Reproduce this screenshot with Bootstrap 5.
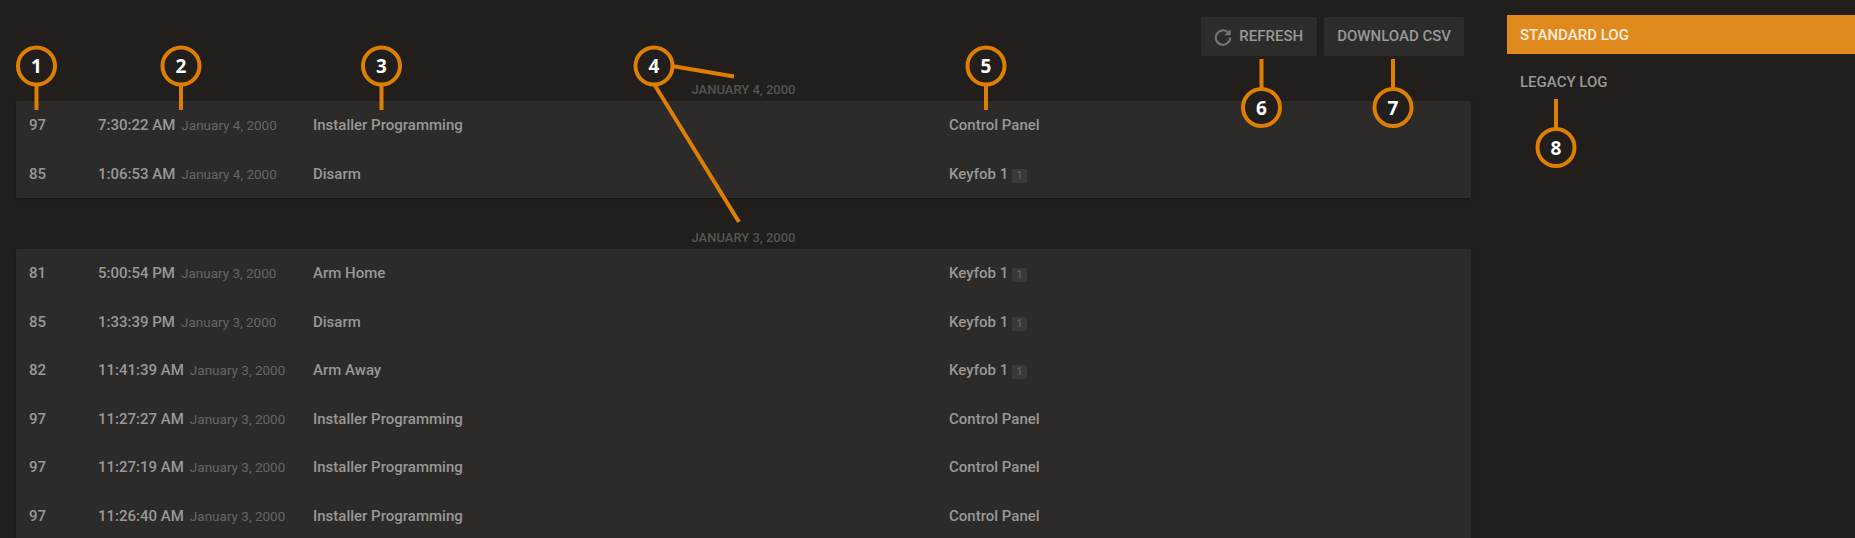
<!DOCTYPE html>
<html lang="en">
<head>
  <meta charset="UTF-8" />
  <meta name="viewport" content="width=device-width, initial-scale=1" />
  <title>Event Log</title>
  <link href="https://cdn.jsdelivr.net/npm/bootstrap@5.3.2/dist/css/bootstrap.min.css" rel="stylesheet">
  <style>
    html, body {
      height: 100%;
      overflow: hidden;
    }
    body {
      font-family: Roboto, "Liberation Sans", sans-serif;
      font-size: 15px;
      font-weight: 500;
      background: #211e1b;
      color: #999896;
    }
    .page-wrap {
      height: 538px;
      overflow: hidden;
    }
    .log-main {
      width: 1471px;
      padding-left: 16px;
    }
    .log-actions {
      padding: 17px 7px 0 0;
      margin-bottom: 21px;
      gap: 7px;
    }
    .log-btn {
      height: 39px;
      padding: 0 13px;
      background: #2d2c2b;
      color: #999896;
      border: 0;
      border-radius: 2px;
      font-size: 15px;
      font-weight: 500;
      text-transform: uppercase;
    }
    .log-btn.with-icon {
      padding-right: 14px;
    }
    .log-btn svg {
      margin-right: 7px;
    }
    .date-head {
      height: 24px;
      line-height: 26px;
      font-size: 13px;
      font-weight: 500;
      color: #555452;
      text-transform: uppercase;
      text-align: center;
    }
    .date-head.later {
      margin-top: 27px;
    }
    .log-rows {
      background: #2c2b2a;
      border-radius: 2px;
      box-shadow: 0 1px 2px rgba(0,0,0,0.25);
    }
    .log-row {
      height: 48.5px;
      align-items: center;
      padding-top: 1px;
      border-bottom: 1px solid #292827;
    }
    .log-row:last-child {
      border-bottom: 0;
    }
    .cell-id { width: 82px; padding-left: 13px; }
    .cell-time { width: 215px; }
    .cell-event { width: 636px; }
    .when-date {
      margin-left: 6px;
      font-size: 13.5px;
      font-weight: 400;
      color: #666563;
    }
    .zone-tag {
      display: inline-block;
      width: 15px;
      height: 14px;
      margin-left: 4px;
      line-height: 14px;
      border-radius: 1px;
      background: #3a3938;
      color: #666563;
      font-size: 11px;
      font-weight: 400;
      text-align: center;
      vertical-align: 0;
    }
    .side-nav {
      padding-top: 15px;
      gap: 8px;
    }
    .side-nav .nav-link {
      height: 39px;
      line-height: 41px;
      padding: 0 13px;
      color: #999896;
      text-transform: uppercase;
      font-size: 15px;
      border-radius: 0;
    }
    .side-nav .nav-link.active {
      background: #e08a1e;
      color: #fbeedd;
    }
    .side-col {
      margin-left: 36px;
    }
    .callouts {
      position: absolute;
      top: 0;
      left: 0;
      pointer-events: none;
    }
    .callouts circle {
      fill: #211e1b;
      stroke: #de7f00;
      stroke-width: 4;
    }
    .callouts line {
      stroke: #de7f00;
      stroke-width: 4;
    }
    .callouts text {
      fill: #fff;
      font-family: "Noto Sans", sans-serif;
      font-size: 19px;
      font-weight: 700;
      text-anchor: middle;
    }
  </style>
</head>
<body>
<div class="page-wrap d-flex position-relative">
  <div class="log-main flex-shrink-0">
    <div class="log-actions d-flex justify-content-end">
      <button class="log-btn with-icon d-flex align-items-center" type="button">
        <svg width="18" height="18" viewBox="0 0 18 18" fill="none" stroke="#777674" stroke-width="2">
          <path d="M14.2 4.6A7.2 7.2 0 1 0 16.2 9.6"/>
          <path d="M16.6 1v6.2h-6.2z" stroke-width="0" fill="#777674"/>
        </svg>
        Refresh
      </button>
      <button class="log-btn" type="button">Download CSV</button>
    </div>

    <div class="date-head">January 4, 2000</div>
    <div class="log-rows">
      <div class="log-row d-flex"><div class="cell-id">97</div><div class="cell-time">7:30:22 AM<span class="when-date">January 4, 2000</span></div><div class="cell-event">Installer Programming</div><div>Control Panel</div></div>
      <div class="log-row d-flex"><div class="cell-id">85</div><div class="cell-time">1:06:53 AM<span class="when-date">January 4, 2000</span></div><div class="cell-event">Disarm</div><div>Keyfob 1<span class="zone-tag">1</span></div></div>
    </div>

    <div class="date-head later">January 3, 2000</div>
    <div class="log-rows">
      <div class="log-row d-flex"><div class="cell-id">81</div><div class="cell-time">5:00:54 PM<span class="when-date">January 3, 2000</span></div><div class="cell-event">Arm Home</div><div>Keyfob 1<span class="zone-tag">1</span></div></div>
      <div class="log-row d-flex"><div class="cell-id">85</div><div class="cell-time">1:33:39 PM<span class="when-date">January 3, 2000</span></div><div class="cell-event">Disarm</div><div>Keyfob 1<span class="zone-tag">1</span></div></div>
      <div class="log-row d-flex"><div class="cell-id">82</div><div class="cell-time">11:41:39 AM<span class="when-date">January 3, 2000</span></div><div class="cell-event">Arm Away</div><div>Keyfob 1<span class="zone-tag">1</span></div></div>
      <div class="log-row d-flex"><div class="cell-id">97</div><div class="cell-time">11:27:27 AM<span class="when-date">January 3, 2000</span></div><div class="cell-event">Installer Programming</div><div>Control Panel</div></div>
      <div class="log-row d-flex"><div class="cell-id">97</div><div class="cell-time">11:27:19 AM<span class="when-date">January 3, 2000</span></div><div class="cell-event">Installer Programming</div><div>Control Panel</div></div>
      <div class="log-row d-flex"><div class="cell-id">97</div><div class="cell-time">11:26:40 AM<span class="when-date">January 3, 2000</span></div><div class="cell-event">Installer Programming</div><div>Control Panel</div></div>
    </div>
  </div>

  <div class="side-col flex-grow-1">
    <nav class="side-nav nav flex-column">
      <a class="nav-link active" href="#">Standard Log</a>
      <a class="nav-link" href="#">Legacy Log</a>
    </nav>
  </div>

  <!-- numbered callouts lie over the page -->
  <svg class="callouts" width="1855" height="538">
    <line x1="36.5" y1="84" x2="36.5" y2="110"/>
    <line x1="181" y1="84" x2="181" y2="110"/>
    <line x1="381.5" y1="84" x2="381.5" y2="110"/>
    <line x1="672" y1="66" x2="734" y2="76.5"/>
    <line x1="654" y1="84" x2="739" y2="222"/>
    <line x1="986" y1="84" x2="986" y2="110"/>
    <line x1="1261.5" y1="59" x2="1261.5" y2="90"/>
    <line x1="1393" y1="59" x2="1393" y2="90"/>
    <line x1="1556" y1="99" x2="1556" y2="130"/>
    <circle cx="36.5" cy="66" r="18.5"/><text x="36.5" y="73">1</text>
    <circle cx="181" cy="66" r="18.5"/><text x="181" y="73">2</text>
    <circle cx="381.5" cy="66" r="18.5"/><text x="381.5" y="73">3</text>
    <circle cx="654" cy="66" r="18.5"/><text x="654" y="73">4</text>
    <circle cx="986" cy="66" r="18.5"/><text x="986" y="73">5</text>
    <circle cx="1261.5" cy="107.5" r="18.5"/><text x="1261.5" y="114.5">6</text>
    <circle cx="1393" cy="107.5" r="18.5"/><text x="1393" y="114.5">7</text>
    <circle cx="1556" cy="147.5" r="18.5"/><text x="1556" y="154.5">8</text>
  </svg>
</div>
<script src="https://cdn.jsdelivr.net/npm/bootstrap@5.3.2/dist/js/bootstrap.bundle.min.js"></script>
</body>
</html>
